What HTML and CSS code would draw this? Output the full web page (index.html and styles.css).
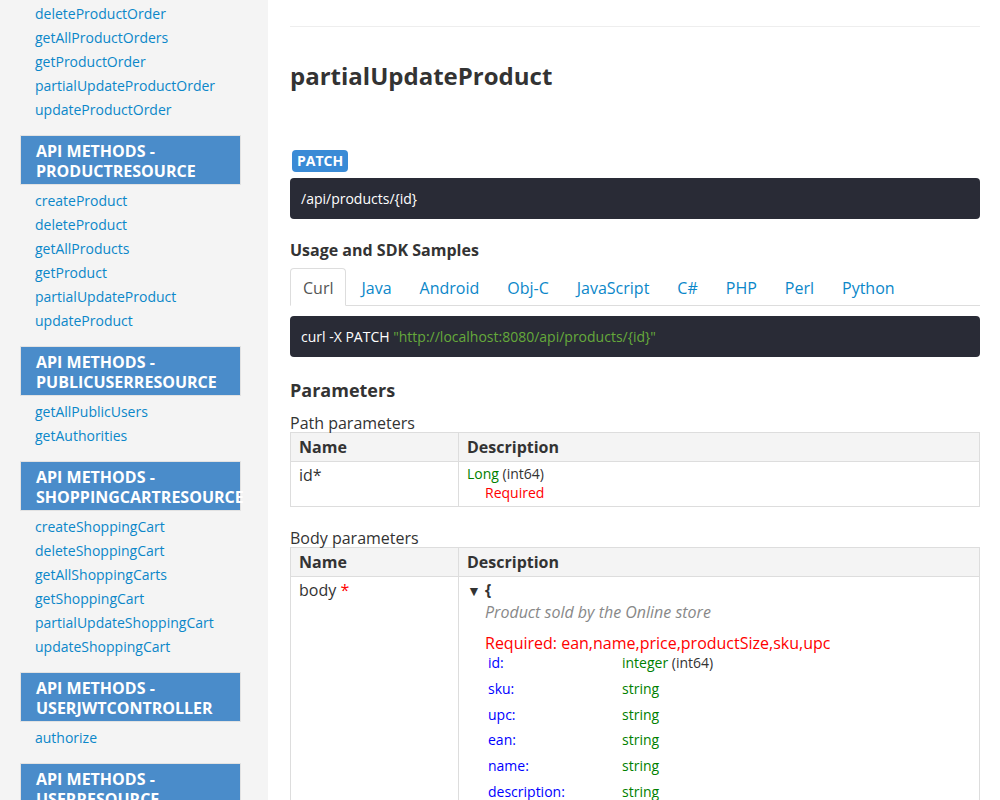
FILE: index.html
```html
<!DOCTYPE html>
<html>
<head>
<meta charset="utf-8">
<link rel="stylesheet" href="styles.css">
</head>
<body>
<div class="page">
  <nav class="sidebar">
    <ul class="links">
      <li><a>deleteProductOrder</a></li>
      <li><a>getAllProductOrders</a></li>
      <li><a>getProductOrder</a></li>
      <li><a>partialUpdateProductOrder</a></li>
      <li><a>updateProductOrder</a></li>
    </ul>
    <div class="group">
      <div class="group-head">API Methods - ProductResource</div>
      <ul class="links">
        <li><a>createProduct</a></li>
        <li><a>deleteProduct</a></li>
        <li><a>getAllProducts</a></li>
        <li><a>getProduct</a></li>
        <li><a>partialUpdateProduct</a></li>
        <li><a>updateProduct</a></li>
      </ul>
    </div>
    <div class="group">
      <div class="group-head">API Methods - PublicUserResource</div>
      <ul class="links">
        <li><a>getAllPublicUsers</a></li>
        <li><a>getAuthorities</a></li>
      </ul>
    </div>
    <div class="group">
      <div class="group-head">API Methods - ShoppingCartResource</div>
      <ul class="links">
        <li><a>createShoppingCart</a></li>
        <li><a>deleteShoppingCart</a></li>
        <li><a>getAllShoppingCarts</a></li>
        <li><a>getShoppingCart</a></li>
        <li><a>partialUpdateShoppingCart</a></li>
        <li><a>updateShoppingCart</a></li>
      </ul>
    </div>
    <div class="group">
      <div class="group-head">API Methods - UserJwtController</div>
      <ul class="links">
        <li><a>authorize</a></li>
      </ul>
    </div>
    <div class="group">
      <div class="group-head">API Methods - UserResource</div>
      <ul class="links">
        <li><a>createUser</a></li>
        <li><a>deleteUser</a></li>
      </ul>
    </div>
  </nav>

  <main class="content">
    <div class="divider"></div>
    <h1 class="method-title">partialUpdateProduct</h1>
    <div class="verb-row"><span class="verb">PATCH</span></div>
    <div class="code-box">/api/products/{id}</div>

    <h3 class="section-sub">Usage and SDK Samples</h3>
    <ul class="tabs">
      <li class="tab active">Curl</li>
      <li class="tab">Java</li>
      <li class="tab">Android</li>
      <li class="tab">Obj-C</li>
      <li class="tab">JavaScript</li>
      <li class="tab">C#</li>
      <li class="tab">PHP</li>
      <li class="tab">Perl</li>
      <li class="tab">Python</li>
    </ul>
    <div class="code-box tab-code">curl -X PATCH <span class="str">"http://localhost:8080/api/products/{id}"</span></div>

    <h2 class="section-title">Parameters</h2>
    <div class="param-label">Path parameters</div>
    <table class="params">
      <thead>
        <tr><th class="col-name">Name</th><th>Description</th></tr>
      </thead>
      <tbody>
        <tr>
          <td class="col-name">id*</td>
          <td class="desc">
            <div class="type-line"><span class="type">Long</span> (int64)</div>
            <div class="required">Required</div>
          </td>
        </tr>
      </tbody>
    </table>

    <div class="param-label body-label">Body parameters</div>
    <table class="params">
      <thead>
        <tr><th class="col-name">Name</th><th>Description</th></tr>
      </thead>
      <tbody>
        <tr>
          <td class="col-name">body <span class="star">*</span></td>
          <td class="desc">
            <div class="model-head"><span class="arrow">▼</span> {</div>
            <div class="model-body">
              <div class="model-desc">Product sold by the Online store</div>
              <div class="model-req">Required: ean,name,price,productSize,sku,upc</div>
              <div class="props">
                <div class="prop"><span class="pname">id:</span><span class="ptype"><span class="type">integer</span> (int64)</span></div>
                <div class="prop"><span class="pname">sku:</span><span class="ptype"><span class="type">string</span></span></div>
                <div class="prop"><span class="pname">upc:</span><span class="ptype"><span class="type">string</span></span></div>
                <div class="prop"><span class="pname">ean:</span><span class="ptype"><span class="type">string</span></span></div>
                <div class="prop"><span class="pname">name:</span><span class="ptype"><span class="type">string</span></span></div>
                <div class="prop"><span class="pname">description:</span><span class="ptype"><span class="type">string</span></span></div>
                <div class="prop"><span class="pname">price:</span><span class="ptype"><span class="type">number</span></span></div>
              </div>
            </div>
          </td>
        </tr>
      </tbody>
    </table>
  </main>
</div>
</body>
</html>
```

FILE: styles.css
```css
* { box-sizing: border-box; }
html, body { margin: 0; padding: 0; }
body {
  font-family: "Open Sans", "Noto Sans", "Liberation Sans", sans-serif;
  color: #333;
  background: #fff;
}
.page {
  display: flex;
  width: 1000px;
  height: 800px;
  overflow: hidden;
}

/* Sidebar */
.sidebar {
  width: 268px;
  flex: 0 0 268px;
  background: #f4f4f4;
  padding: 2px 27px 0 20px;
}
.links {
  list-style: none;
  margin: 0;
  padding: 0 0 0 15px;
}
.links li {
  font-size: 14px;
  line-height: 24px;
  white-space: nowrap;
}
.links a {
  color: #0b87c9;
  text-decoration: none;
}
.group { margin-top: 13px; }
.group-head {
  background: #4a8cca;
  border: 1px solid #e2e2e2;
  color: #fff;
  font-weight: 700;
  font-size: 16px;
  line-height: 20px;
  text-transform: uppercase;
  padding: 5px 15px 3px;
  margin-bottom: 4px;
  white-space: normal;
}

/* Main */
.content {
  flex: 1;
  padding: 0 20px 0 22px;
  min-width: 0;
}
.divider {
  margin-top: 26px;
  border-top: 1px solid #eee;
}
.method-title {
  font-size: 24px;
  font-weight: 700;
  line-height: 30px;
  margin: 34px 0 0;
  color: #333;
}
.verb-row { margin-top: 59px; }
.verb {
  display: inline-block;
  margin-left: 2px;
  background: #3a8bd6;
  color: #fff;
  font-weight: 700;
  font-size: 14px;
  line-height: 22px;
  height: 22px;
  padding: 0 5px;
  border-radius: 4px;
  vertical-align: top;
}
.code-box {
  margin-top: 6px;
  background: #292b36;
  color: #fff;
  border-radius: 4px;
  font-size: 14px;
  line-height: 21px;
  padding: 10px 11px;
}
.code-box .str { color: #65a93b; }

.section-sub {
  font-size: 16px;
  font-weight: 700;
  line-height: 22px;
  margin: 20px 0 0;
}
.tabs {
  list-style: none;
  margin: 7px 0 0;
  padding: 0;
  display: flex;
  border-bottom: 1px solid #ddd;
}
.tab {
  font-size: 16px;
  line-height: 22px;
  padding: 8px 12px 6px;
  margin-right: 2px;
  margin-bottom: -1px;
  color: #0b87c9;
  border: 1px solid transparent;
  border-radius: 4px 4px 0 0;
}
.tab.active {
  color: #555;
  background: #fff;
  border-color: #ddd #ddd #fff;
}
.tab-code { margin-top: 10px; }

.section-title {
  font-size: 18px;
  font-weight: 700;
  line-height: 24px;
  margin: 21px 0 0;
}
.param-label {
  font-size: 16px;
  line-height: 18px;
  margin-top: 12px;
}
.body-label { margin-top: 22px; }

.params {
  width: 100%;
  border-collapse: collapse;
  border: 1px solid #ddd;
}
.params th {
  background: #f4f4f4;
  text-align: left;
  font-size: 16px;
  font-weight: 700;
  line-height: 20px;
  padding: 4px 8px;
  border: 1px solid #ddd;
}
.params td {
  vertical-align: top;
  border: 1px solid #ddd;
  padding: 3px 8px 3px;
  font-size: 16px;
  line-height: 20px;
}
.params .col-name { width: 168px; }
.desc { font-size: 14px; }
.type-line { font-size: 14px; line-height: 17px; }
.type { color: #008000; }
.required {
  color: #ff0000;
  font-size: 14px;
  line-height: 21px;
  margin-left: 18px;
}
.star { color: #ff0000; }

.model-head {
  font-size: 16px;
  font-weight: 700;
  line-height: 20px;
}
.arrow { font-size: 14px; }
.model-body { padding-left: 18px; }
.model-desc {
  font-style: italic;
  color: #888;
  font-size: 16px;
  line-height: 22px;
}
.model-req {
  color: #ff0000;
  font-size: 16px;
  line-height: 20px;
  margin-top: 10px;
}
.props { padding-left: 3px; margin-top: -3px; }
.prop {
  display: flex;
  font-size: 14px;
  line-height: 25.8px;
}
.pname { width: 134px; color: #0000ff; }
.ptype { color: #333; }
```
